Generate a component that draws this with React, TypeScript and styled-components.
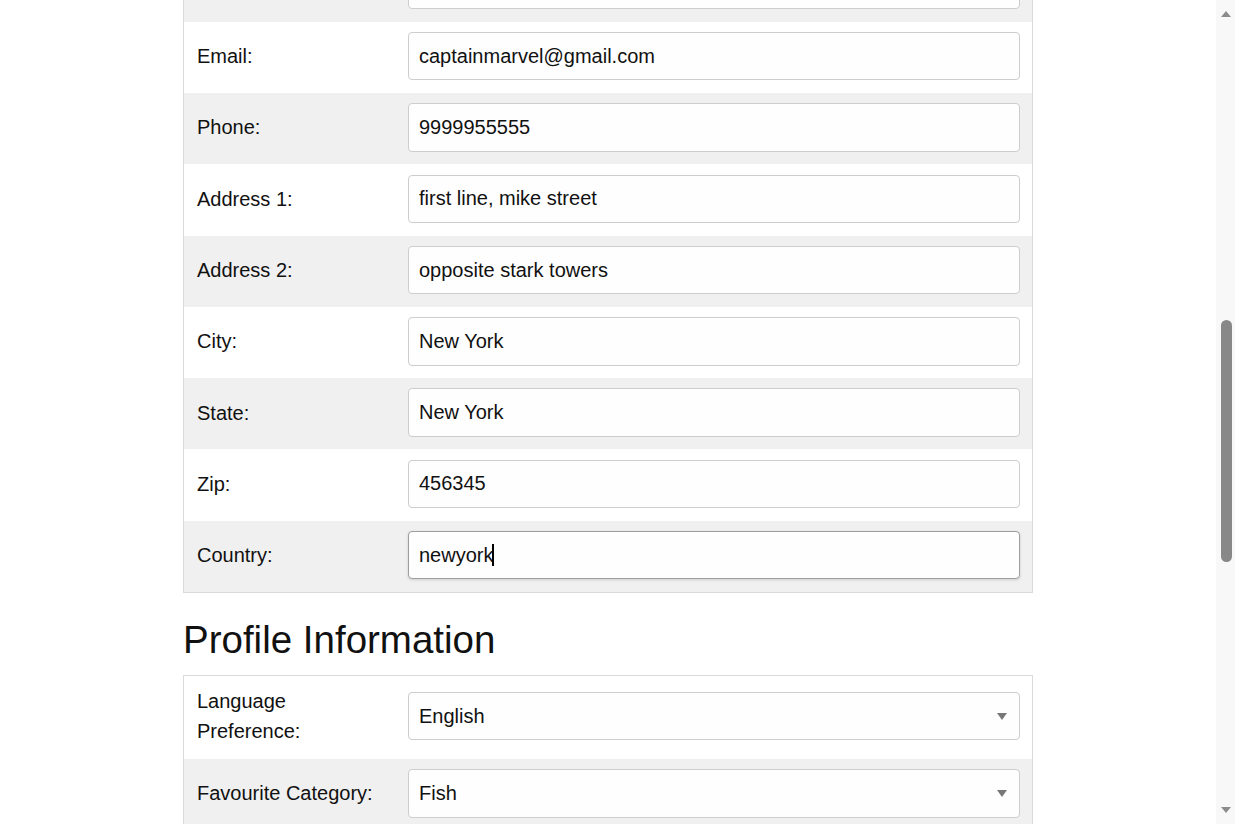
import React from 'react';
import styled, { createGlobalStyle, css } from 'styled-components';

const GlobalStyle = createGlobalStyle`
  html, body {
    margin: 0;
    padding: 0;
    height: 100%;
    overflow: hidden;
    background: #ffffff;
  }
  body {
    font-family: "Liberation Sans", Arial, sans-serif;
    color: #111111;
  }
  #root { height: 100%; }
`;

const Viewport = styled.div`
  display: flex;
  height: 100vh;
  width: 100vw;
`;

const Main = styled.main`
  flex: 1;
  min-width: 0;
  overflow: hidden;
`;

const Scrolled = styled.div<{ $offset: number }>`
  margin-top: ${(p) => -p.$offset}px;
`;

const Container = styled.div`
  width: 850px;
  margin: 0 auto;
`;

const FormTable = styled.div`
  border: 1px solid #dadada;
`;

const Row = styled.div<{ $shaded?: boolean }>`
  display: grid;
  grid-template-columns: 186px 1fr;
  column-gap: 25px;
  align-items: center;
  padding: 10.3px 12px 12.6px 13px;
  background: ${(p) => (p.$shaded ? '#f0f0f0' : '#ffffff')};
`;

const Label = styled.label`
  font-size: 20px;
  line-height: 30px;
  color: #111111;
`;

const fieldBase = css`
  box-sizing: border-box;
  width: 100%;
  height: 48.4px;
  margin: 0;
  padding: 0 10px;
  border: 1px solid #cdcdcd;
  border-radius: 4px;
  background: #fefefe;
  font: 20px "Liberation Sans", Arial, sans-serif;
  color: #111111;
  outline: none;
`;

const TextInput = styled.input<{ $focused?: boolean }>`
  ${fieldBase}
  ${(p) =>
    p.$focused &&
    css`
      border-color: #9e9e9e;
      box-shadow: 0 1px 3px rgba(0, 0, 0, 0.14);
      caret-color: transparent;
    `}
`;

const FieldWrap = styled.div`
  position: relative;
`;

const CaretMirror = styled.div`
  position: absolute;
  inset: 0;
  padding: 0 11px;
  display: flex;
  align-items: center;
  pointer-events: none;
  font: 20px "Liberation Sans", Arial, sans-serif;
  color: transparent;
  white-space: pre;
`;

const Caret = styled.span`
  display: inline-block;
  width: 2px;
  height: 22px;
  margin-left: -1px;
  background: #000000;
`;

const SelectWrap = styled.div`
  position: relative;
  &::after {
    content: '';
    position: absolute;
    right: 13px;
    top: 50%;
    margin-top: -3.5px;
    border-left: 5px solid transparent;
    border-right: 5px solid transparent;
    border-top: 7px solid #777777;
    pointer-events: none;
  }
`;

const Select = styled.select`
  ${fieldBase}
  appearance: none;
  -webkit-appearance: none;
`;

const SectionTitle = styled.h2`
  font-size: 38.5px;
  font-weight: 400;
  line-height: normal;
  margin: 25px 0 13px;
  color: #111111;
`;

const ScrollBar = styled.div`
  width: 19px;
  flex: none;
  background: #f8f8f8;
  display: flex;
  flex-direction: column;
`;

const ScrollArrow = styled.div<{ $dir: 'up' | 'down' }>`
  height: 28px;
  display: flex;
  align-items: center;
  justify-content: center;
  &::before {
    content: '';
    margin-left: 1px;
    border-left: 5px solid transparent;
    border-right: 5px solid transparent;
    ${(p) =>
      p.$dir === 'up'
        ? 'border-bottom: 6px solid #8c8c8c;'
        : 'border-top: 6px solid #8c8c8c;'}
  }
`;

const Track = styled.div`
  flex: 1;
  display: flex;
  flex-direction: column;
  align-items: center;
`;

const Thumb = styled.div<{ $top: number; $size: number }>`
  width: 11px;
  margin-left: 1px;
  margin-top: ${(p) => p.$top}px;
  height: ${(p) => p.$size}px;
  border-radius: 6px;
  background: #888888;
`;

type Field = { label: string; value: string; focused?: boolean };

const contactFields: Field[] = [
  { label: 'Last Name:', value: 'danvers' },
  { label: 'Email:', value: 'captainmarvel@gmail.com' },
  { label: 'Phone:', value: '9999955555' },
  { label: 'Address 1:', value: 'first line, mike street' },
  { label: 'Address 2:', value: 'opposite stark towers' },
  { label: 'City:', value: 'New York' },
  { label: 'State:', value: 'New York' },
  { label: 'Zip:', value: '456345' },
  { label: 'Country:', value: 'newyork', focused: true },
];

type SelectField = { label: string; value: string; options: string[] };

const profileFields: SelectField[] = [
  { label: 'Language Preference:', value: 'English', options: ['English', 'Spanish', 'French'] },
  { label: 'Favourite Category:', value: 'Fish', options: ['Fish', 'Dogs', 'Cats', 'Birds'] },
];

export default function App() {
  return (
    <>
      <GlobalStyle />
      <Viewport>
        <Main>
          <Scrolled $offset={50.6}>
            <Container>
              <FormTable>
                {contactFields.map((f, i) => (
                  <Row key={f.label} $shaded={i % 2 === 0}>
                    <Label>{f.label}</Label>
                    {f.focused ? (
                      <FieldWrap>
                        <TextInput $focused defaultValue={f.value} />
                        <CaretMirror>
                          {f.value}
                          <Caret />
                        </CaretMirror>
                      </FieldWrap>
                    ) : (
                      <TextInput defaultValue={f.value} />
                    )}
                  </Row>
                ))}
              </FormTable>
              <SectionTitle>Profile Information</SectionTitle>
              <FormTable>
                {profileFields.map((f, i) => (
                  <Row key={f.label} $shaded={i % 2 === 1}>
                    <Label>{f.label}</Label>
                    <SelectWrap>
                      <Select defaultValue={f.value}>
                        {f.options.map((o) => (
                          <option key={o} value={o}>
                            {o}
                          </option>
                        ))}
                      </Select>
                    </SelectWrap>
                  </Row>
                ))}
              </FormTable>
            </Container>
          </Scrolled>
        </Main>
        <ScrollBar>
          <ScrollArrow $dir="up" />
          <Track>
            <Thumb $top={292} $size={242} />
          </Track>
          <ScrollArrow $dir="down" />
        </ScrollBar>
      </Viewport>
    </>
  );
}
